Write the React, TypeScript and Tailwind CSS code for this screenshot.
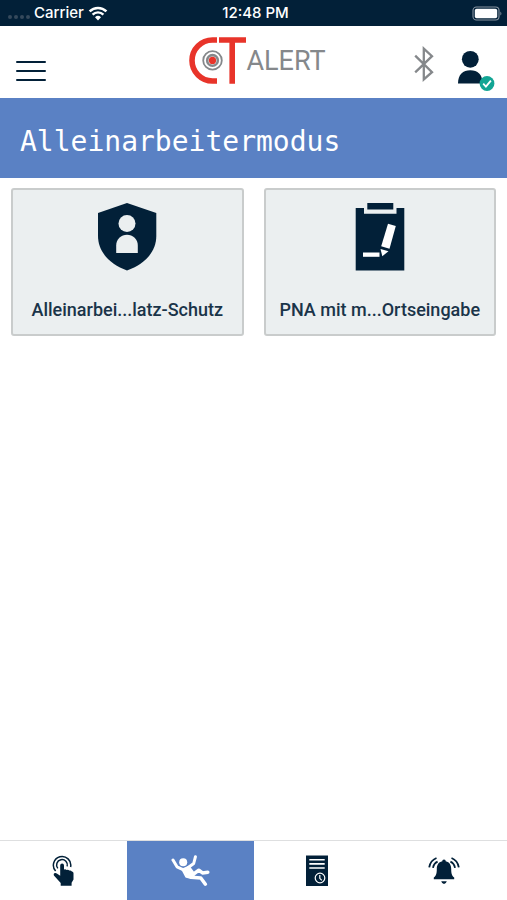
import type { ReactNode } from 'react'
import { clsx } from 'clsx'

interface IconProps {
  className?: string
}

function WifiIcon() {
  return (
    <svg viewBox="0 0 20 15" className="h-[15px] w-5" fill="none" stroke="currentColor" aria-hidden="true">
      <path d="M1.6 5.4a12 12 0 0 1 16.8 0" strokeWidth="2.6" />
      <path d="M4.6 8.6a7.7 7.7 0 0 1 10.8 0" strokeWidth="2.4" />
      <path d="M10 14.4 7 11.3a4.3 4.3 0 0 1 6 0z" fill="currentColor" stroke="none" />
    </svg>
  )
}

function BatteryIcon() {
  return (
    <svg viewBox="0 0 31 15" className="h-[15px] w-[31px]" aria-hidden="true">
      <rect x="1" y="1" width="26" height="13" rx="3.5" fill="none" stroke="#8793a0" strokeWidth="1.1" />
      <rect x="2.8" y="2.8" width="22.4" height="9.4" rx="1.8" fill="#fff" />
      <path d="M28.4 5.4q2 2.1 0 4.2z" fill="#8793a0" />
    </svg>
  )
}

function LogoMark() {
  return (
    <svg viewBox="0 0 57 47" className="h-[47px] w-[57px]" fill="none" aria-hidden="true">
      <path d="M28 3h-4.500a20.500 20.500 0 0 0 0 41H28" stroke="#e8342a" strokeWidth="5.600" />
      <path d="M30 3h27M43.200 1v45.800" stroke="#e8342a" strokeWidth="5.600" />
      <circle cx="23.500" cy="23.400" r="9.300" stroke="#85888b" strokeWidth="1.800" />
      <circle cx="23.500" cy="23.400" r="5.300" stroke="#85888b" strokeWidth="2.600" />
      <circle cx="23.500" cy="23.400" r="3.600" fill="#e8342a" />
    </svg>
  )
}

function BluetoothIcon() {
  return (
    <svg viewBox="0 0 20 36" className="h-9 w-5" fill="none" stroke="#85888b" strokeWidth="2.3" aria-hidden="true">
      <path d="M1.2 9.6 18 26.2 9.8 33.4V2.6L18 10.2 1.2 26.4" />
    </svg>
  )
}

function UserIcon() {
  return (
    <svg viewBox="0 0 38 42" className="h-[42px] w-[38px]" aria-hidden="true">
      <circle cx="13.3" cy="10.3" r="8.4" fill="#022038" />
      <path d="M1 34.6C1 25.5 6 21.3 13.3 21.3s12.3 4.2 12.3 13.3z" fill="#022038" />
      <circle cx="30" cy="34.500" r="7.4" fill="#12a594" />
      <path d="m26.2 34.7 2.7 2.9 5-6" fill="none" stroke="#fff" strokeWidth="1.8" />
    </svg>
  )
}

function ShieldIcon() {
  return (
    <svg viewBox="0 0 60 68" className="h-[68px] w-[60px]" aria-hidden="true">
      <path d="M30 0 59.300 10v23c0 16.500-12.500 28.500-29.300 34.500C13.500 61.500 1 49.500 1 33V10z" fill="#022038" />
      <circle cx="30" cy="20.5" r="8.5" fill="#ebeff0" />
      <path d="M19.200 50v-7.500a10.800 10.800 0 0 1 21.600 0V50z" fill="#ebeff0" />
    </svg>
  )
}

function ClipboardIcon() {
  return (
    <svg viewBox="0 0 50 68" className="h-[68px] w-[50px]" aria-hidden="true">
      <path d="M.7 5H9v5.700h32.500V5h7.800v62.500H.7z" fill="#022038" />
      <path d="M12.300 0h26v6.500h-26z" fill="#022038" />
      <path d="M8 49.500h16.500v4.300H8z" fill="#fff" />
      <path d="m33 20.700 7.800 2.300-6.300 22.700-8.300-2.400z" fill="#fff" />
      <path d="m25.500 46 8 2.200-6.200 5z" fill="#fff" />
    </svg>
  )
}

function TouchIcon({ className }: IconProps) {
  return (
    <svg viewBox="0 0 24 32" className={className} fill="none" stroke="#022038" aria-hidden="true">
      <path d="M4.600 16a8.700 8.700 0 1 1 15-4" strokeWidth="1.500" />
      <path d="M6.800 13.400a5.400 5.400 0 1 1 9.400-2" strokeWidth="1.500" />
      <path
        d="M9.200 10.500a1.900 1.900 0 0 1 3.800 0v3.900q1.400-.7 2.700.5 1.500-.7 2.600.6 1.600-.4 2.600.9 1.600 0 1.600 1.900v6.200l-1.900 3.300v2.900H9.700v-2.600L2.900 20.600q-.8-1.800.8-2.500 1.200-.4 2.500.7l3 2z"
        fill="#022038"
        stroke="none"
      />
    </svg>
  )
}

function FallIcon({ className }: IconProps) {
  return (
    <svg
      viewBox="0 0 40 32"
      className={className}
      fill="none"
      stroke="#fff"
      strokeLinecap="round"
      strokeLinejoin="round"
      aria-hidden="true"
    >
      <circle cx="13.200" cy="7.300" r="4" fill="#fff" stroke="none" />
      <path d="m3 5 4 6.800 6.500 3M25.400 1.800l-1.700 6.700-5.500 4" strokeWidth="3" />
      <path d="m12.500 14.500 6.500-2.700 4.800 6.700-2.500 4.500-5-1.300z" fill="#fff" strokeWidth="2.200" />
      <path d="m23 19.500 5.800-4.300 3.700 2.700 5.300-.7M21 22.300l9.800.7 4.600 6.200" strokeWidth="3.500" />
    </svg>
  )
}

function LogIcon({ className }: IconProps) {
  return (
    <svg viewBox="0 0 24 32" className={className} fill="none" stroke="#fff" aria-hidden="true">
      <path d="M1 .5h22v30.500H1z" fill="#022038" stroke="none" />
      <path d="M4.300 4.800h15.400M4.300 8.900h15.400M4.300 13h15.400" strokeWidth="1.600" />
      <circle cx="15" cy="23" r="4.800" strokeWidth="1.200" />
      <path d="M14.800 20v3.300l2 2" strokeWidth="1.200" />
    </svg>
  )
}

function BellIcon({ className }: IconProps) {
  return (
    <svg viewBox="0 0 32 28" className={className} fill="none" stroke="#022038" aria-hidden="true">
      <path
        d="M16 2.400a1.700 1.700 0 0 1 1.700 1.900c4 .9 5.500 4 5.500 7.700 0 5 .9 7 3 8.500v1.700H5.800v-1.700c2.100-1.500 3-3.500 3-8.500 0-3.700 1.500-6.800 5.500-7.700A1.700 1.700 0 0 1 16 2.400z"
        fill="#022038"
        stroke="none"
      />
      <path d="M13.200 24.200h5.600q-.9 2.800-2.800 2.800t-2.800-2.800z" fill="#022038" stroke="none" />
      <path d="M8.500 1Q2.300 3.500 1.200 10.300M9.600 4.600Q5.800 6.200 5 10.900" strokeWidth="1.800" />
      <path d="M23.500 1q6.200 2.500 7.300 9.300M22.400 4.600q3.800 1.600 4.600 6.300" strokeWidth="1.800" />
    </svg>
  )
}

function StatusBar() {
  return (
    <div className="grid h-[26px] grid-cols-3 items-center bg-[#022038] pr-1 pl-2 font-['Inter',sans-serif] text-[15px] leading-5 font-medium text-white">
      <div className="flex items-center gap-1">
        <span className="flex gap-0.5 pt-2" aria-hidden="true">
          <i className="size-1 rounded-full bg-[#35495c]" />
          <i className="size-1 rounded-full bg-[#35495c]" />
          <i className="size-1 rounded-full bg-[#35495c]" />
          <i className="size-1 rounded-full bg-[#35495c]" />
        </span>
        <span>Carrier</span>
        <WifiIcon />
      </div>
      <span className="text-center">12:48 PM</span>
      <div className="flex justify-end">
        <BatteryIcon />
      </div>
    </div>
  )
}

function Header() {
  return (
    <header className="grid h-[72px] grid-cols-[1fr_auto_1fr] items-center bg-white px-3">
      <button type="button" aria-label="Menü" className="ml-1 flex w-[30px] flex-col gap-[7px] pt-[18px]">
        <span className="h-0.5 w-full rounded-full bg-[#022038]" />
        <span className="h-0.5 w-full rounded-full bg-[#022038]" />
        <span className="h-0.5 w-full rounded-full bg-[#022038]" />
      </button>
      <a href="#" className="flex items-center pb-[3px] pl-2" aria-label="CT Alert">
        <LogoMark />
        <span className="font-['Roboto',sans-serif] text-[27px] leading-8 text-[#85888b]">ALERT</span>
      </a>
      <div className="flex items-center justify-end gap-[23px]">
        <button type="button" aria-label="Bluetooth" className="pt-1">
          <BluetoothIcon />
        </button>
        <button type="button" aria-label="Profil" className="pt-4">
          <UserIcon />
        </button>
      </div>
    </header>
  )
}

function ModeCard({ icon, label }: { icon: ReactNode; label: string }) {
  return (
    <button
      type="button"
      className="flex h-[148px] min-w-0 flex-col items-center justify-between rounded-[3px] border-2 border-[#c9cccc] bg-[#ebeff0] pt-[13px] pb-3"
    >
      {icon}
      <span className="font-['Roboto',sans-serif] text-lg leading-6 font-medium whitespace-nowrap text-[#1a3449]">
        {label}
      </span>
    </button>
  )
}

const tabs = [
  { label: 'Alarm auslösen', icon: <TouchIcon className="h-8 w-6" /> },
  { label: 'Alleinarbeitermodus', icon: <FallIcon className="h-8 w-10" />, active: true },
  { label: 'Protokoll', icon: <LogIcon className="h-8 w-6" /> },
  { label: 'Alarme', icon: <BellIcon className="h-7 w-8" /> },
]

export default function App() {
  return (
    <div className="flex min-h-screen flex-col bg-white">
      <StatusBar />
      <Header />

      <h1 className="bg-[#5a81c4] px-5 pt-6 pb-4 font-['DejaVu_Sans_Mono',monospace] text-[28px] leading-10 text-white">
        Alleinarbeitermodus
      </h1>

      <main className="grid flex-1 grid-cols-2 content-start gap-5 px-[11px] py-2.5">
        <ModeCard icon={<ShieldIcon />} label="Alleinarbei...latz-Schutz" />
        <ModeCard icon={<ClipboardIcon />} label="PNA mit m...Ortseingabe" />
      </main>

      <nav className="grid h-[60px] grid-cols-4 border-t border-[#dedfe0]">
        {tabs.map((tab) => (
          <button
            key={tab.label}
            type="button"
            aria-label={tab.label}
            className={clsx('flex items-center justify-center', tab.active && 'bg-[#5a81c4]')}
          >
            {tab.icon}
          </button>
        ))}
      </nav>
    </div>
  )
}
